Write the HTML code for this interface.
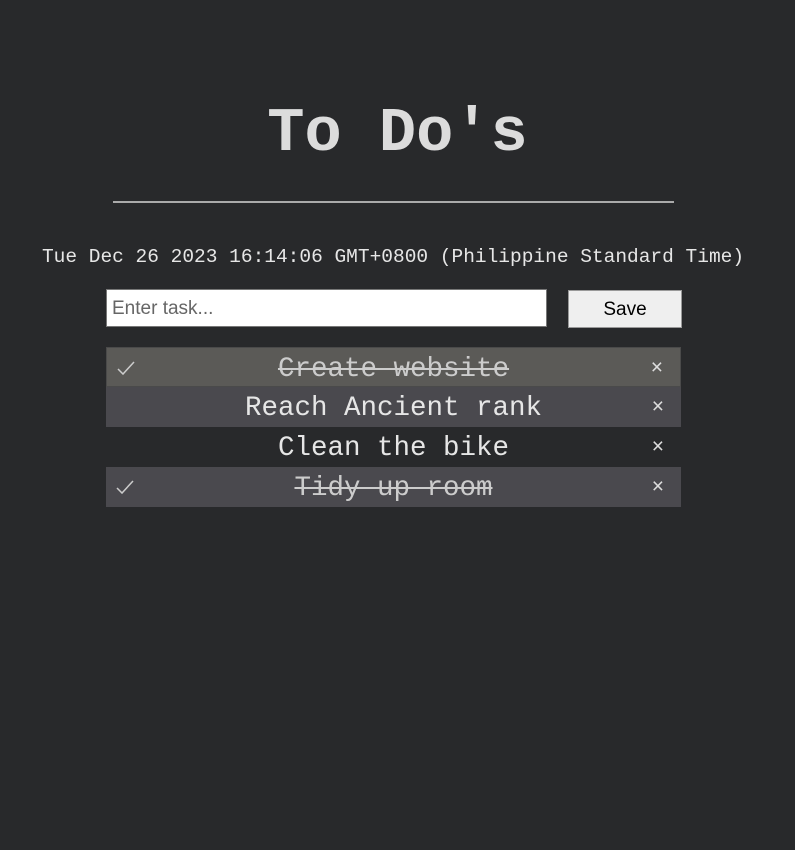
<!DOCTYPE html>
<html><head><style>
body{margin:0;background:#28292b;width:795px;height:850px;overflow:hidden;font-family:"Liberation Mono",monospace;color:#ddd}
h1{position:absolute;left:0;width:795px;top:99px;margin:0;text-align:center;font-size:62px;font-weight:bold;line-height:70px;color:#dcdcdc}
.hr{position:absolute;left:113px;width:561px;top:201px;height:2px;background:#aaa}
.date{position:absolute;left:0;width:786px;top:246px;text-align:center;font-size:19.5px;color:#e6e6e6}
input{position:absolute;left:106px;top:289px;width:441px;height:38px;box-sizing:border-box;border:1px solid #777;font-family:"Liberation Sans",sans-serif;font-size:19px;padding:2px 5px 0;background:#fff}
input::placeholder{color:#666}
button{position:absolute;left:568px;top:290px;width:114px;height:38px;background:#efefef;border:1px solid #999;font-family:"Liberation Sans",sans-serif;font-size:19px;color:#000;padding-top:2px}
.row{position:absolute;left:106px;width:575px;height:40px;line-height:44px;text-align:center;font-size:27.5px;color:#e6e6e6;box-sizing:border-box}
.row s{text-decoration-thickness:2px;color:#ccc}
.ck{position:absolute;left:10px;top:11px;width:18px;height:18px}
.x{position:absolute;right:17px;top:0;font-size:21px;line-height:40px;color:#ddd;font-family:"Liberation Sans",sans-serif}
</style></head><body>
<h1>To Do's</h1>
<div class="hr"></div>
<div class="date">Tue Dec 26 2023 16:14:06 GMT+0800 (Philippine Standard Time)</div>
<input placeholder="Enter task...">
<button>Save</button>
<div class="row" style="top:347px;background:#5b5a57;border:1px solid #4a4a4a"><svg class="ck" viewBox="0 0 18 18"><path d="M1 10 L6 15 L17 3" fill="none" stroke="#ccc" stroke-width="1.5"/></svg><s>Create website</s><span class="x">×</span></div>
<div class="row" style="top:387px;background:#4a494e"><span>Reach Ancient rank</span><span class="x">×</span></div>
<div class="row" style="top:427px"><span>Clean the bike</span><span class="x">×</span></div>
<div class="row" style="top:467px;background:#4a494e"><svg class="ck" viewBox="0 0 18 18"><path d="M1 10 L6 15 L17 3" fill="none" stroke="#ccc" stroke-width="1.5"/></svg><s>Tidy up room</s><span class="x">×</span></div>
</body></html>
